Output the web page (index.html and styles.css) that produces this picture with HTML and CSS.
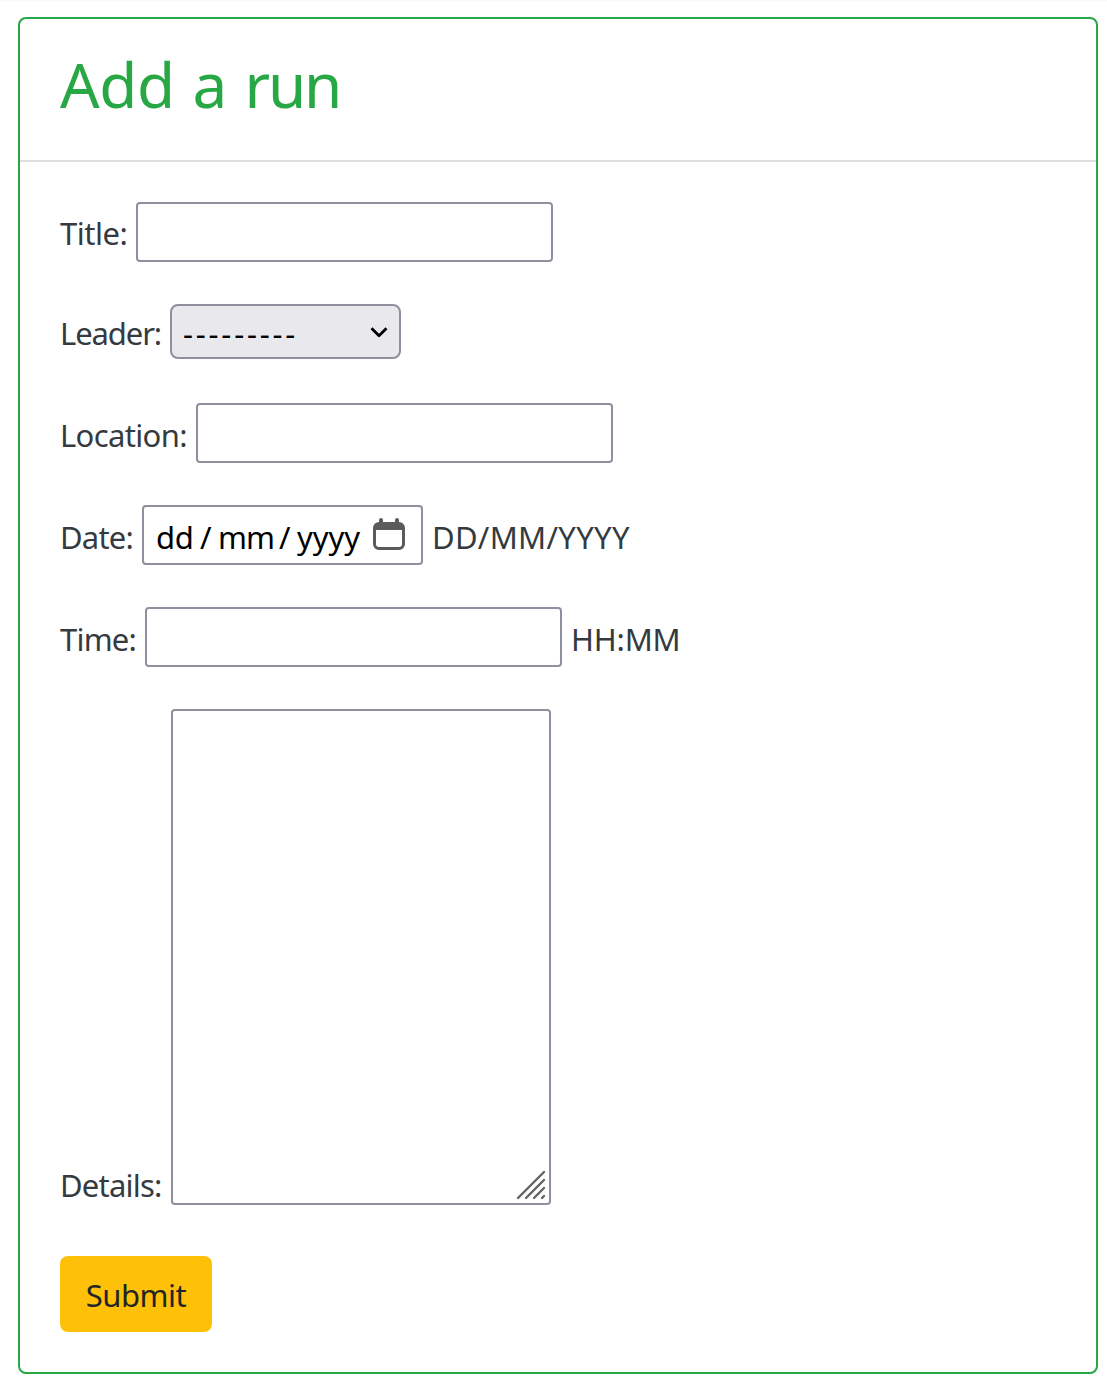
FILE: index.html
```html
<!DOCTYPE html>
<html lang="en">
<head>
<meta charset="utf-8">
<title>Add a run</title>
<link rel="stylesheet" href="styles.css">
</head>
<body>
<main class="card">
  <header class="card-header"><h1 class="heading">Add a <span class="heading-tight">run</span></h1></header>
  <form class="card-body">
    <div class="row title-row"><label class="label" for="title">Title:</label><input class="control text-input" id="title" type="text"></div>
    <div class="row leader-row"><label class="label" for="leader">Leader:</label>
      <div class="select-wrap">
        <select class="control select" id="leader"><option>---------</option></select>
        <svg class="chevron" width="18" height="13" viewBox="0 0 18 13"><path d="M1.5 2.2 9 9.7 16.5 2.2" fill="none" stroke="#000" stroke-width="2.8" stroke-linecap="butt" stroke-linejoin="round"/></svg>
      </div>
    </div>
    <div class="row location-row"><label class="label" for="location">Location:</label><input class="control text-input" id="location" type="text"></div>
    <div class="row date-row"><span class="label">Date:</span>
      <div class="control date"><span class="day">dd</span><span class="slash">/</span><span class="month">mm</span><span class="slash">/</span><span class="year">yyyy</span>
        <svg class="calendar" width="32" height="32" viewBox="0 0 32 32"><path fill="#5b5b5b" fill-rule="evenodd" d="M6 4V2a2 2 0 0 1 4 0v2h12V2a2 2 0 0 1 4 0v2a6 6 0 0 1 6 6v16a6 6 0 0 1-6 6H6a6 6 0 0 1-6-6V10a6 6 0 0 1 6-6ZM3 12v14a3 3 0 0 0 3 3h20a3 3 0 0 0 3-3V12Z"/></svg>
      </div>
      <span class="help date-help">DD/MM/YYYY</span>
    </div>
    <div class="row time-row"><label class="label" for="time">Time:</label><input class="control text-input" id="time" type="text"><span class="help time-help">HH:MM</span></div>
    <div class="row details-row"><label class="label" for="details">Details:</label>
      <div class="area-wrap">
        <textarea class="control textarea" id="details"></textarea>
        <svg class="grip" width="30" height="30" viewBox="0 0 30 30"><path d="M2 28 28 2M10 28 28 10M18 28 28 18M26 28 28 26" fill="none" stroke="#646464" stroke-width="2.4" stroke-linecap="round"/></svg>
      </div>
    </div>
    <button class="submit" type="button">Submit</button>
  </form>
</main>
</body>
</html>
```
FILE: styles.css
```css
* { box-sizing: border-box; }
body {
  margin: 0;
  padding: 16px 9px 19px 18px;
  background: #fff;
  border-top: 1px solid #f8f9fa;
  color: #343a40;
  font: 31px/48px "Noto Sans", "Open Sans", sans-serif;
}
.card { height: 1357px; border: 2px solid #28a745; border-radius: 8px; }
.card-header { height: 143px; padding: 27px 40px 0; border-bottom: 2px solid #dfdfdf; }
.heading { margin: 0; color: #28a745; font-size: 62px; font-weight: 400; line-height: 77px; letter-spacing: -0.4px; word-spacing: 2px; white-space: nowrap; }
.heading-tight { letter-spacing: -2.2px; }
.card-body { padding: 40px; }
.row { display: flex; align-items: flex-start; height: 60px; margin-bottom: 42px; white-space: nowrap; }
.label { flex: none; margin-top: 8px; letter-spacing: -0.8px; }
.title-row .label { width: 76px; margin-top: 7px; letter-spacing: -0.5px; }
.leader-row { height: 55px; margin-bottom: 44px; }
.leader-row .label { width: 110px; margin-top: 5px; letter-spacing: -1.1px; }
.location-row .label { width: 136px; letter-spacing: -0.65px; }
.date-row .label { width: 82px; }
.time-row .label { width: 85px; }
.details-row { height: 496px; margin-bottom: 51px; }
.details-row .label { width: 111px; margin-top: 452px; }
.control { display: block; margin: 0; border: 2px solid #8f8f9d; border-radius: 4px; background: #fff; color: #000; font: inherit; outline: none; }
.text-input { width: 417px; height: 60px; }
.select-wrap { position: relative; }
.select { width: 231px; height: 55px; padding: 2px 11px 0; appearance: none; border-radius: 8px; background: #e9e9ed; letter-spacing: 2.8px; }
.chevron { position: absolute; right: 13px; top: 22px; }
.date { display: flex; width: 281px; height: 60px; padding: 6px 0 0 12px; letter-spacing: -0.3px; }
.day { width: 44px; }
.slash { width: 18px; }
.month { width: 61px; letter-spacing: -1px; }
.year { width: 76px; letter-spacing: -0.1px; }
.calendar { margin-top: 5px; }
.help { margin: 8px 0 0 9px; }
.date-help { letter-spacing: 0.3px; }
.time-help { letter-spacing: -0.2px; }
.area-wrap { position: relative; }
.textarea { width: 380px; height: 496px; resize: none; }
.grip { position: absolute; right: 5px; bottom: 5px; }
.submit { display: block; width: 152px; height: 76px; padding: 2px 0 0; border: 0; border-radius: 8px; background: #ffc107; color: #212529; font: inherit; letter-spacing: -0.5px; }
```
